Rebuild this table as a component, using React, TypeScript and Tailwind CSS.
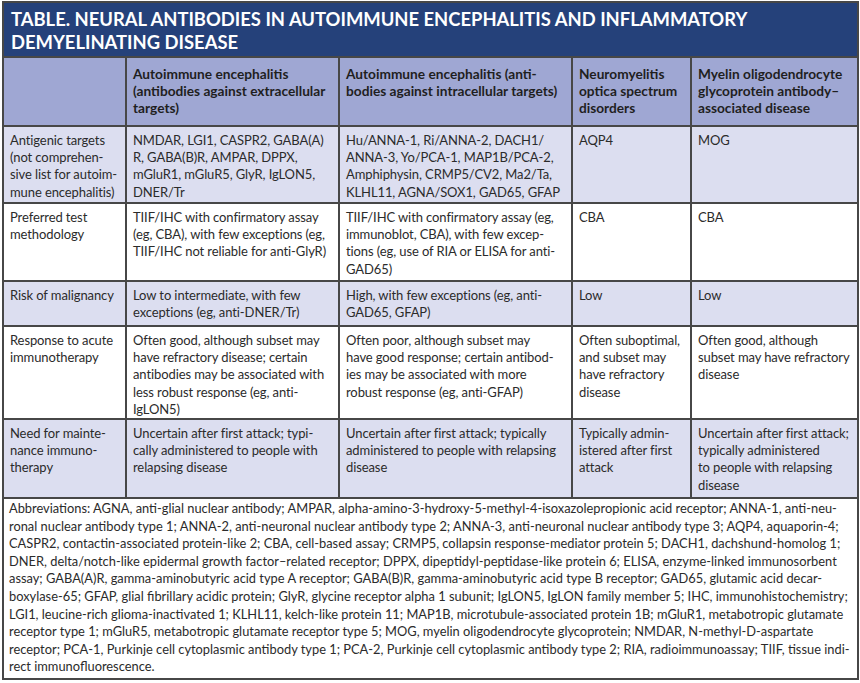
import React from 'react';

type Row = { shaded: boolean; h: string; cells: string[][] };

const headers: string[][] = [
    [],
    ['Autoimmune encephalitis', '(antibodies against extracellular', 'targets)'],
    ['Autoimmune encephalitis (anti-', 'bodies against intracellular targets)'],
    ['Neuromyelitis', 'optica spectrum', 'disorders'],
    ['Myelin oligodendrocyte', 'glycoprotein antibody–', 'associated disease'],
];

const rows: Row[] = [
    {
        shaded: true,
        h: 'h-[75px]',
        cells: [
            ['Antigenic targets', '(not comprehen-', 'sive list for autoim-', 'mune encephalitis)'],
            ['NMDAR, LGI1, CASPR2, GABA(A)', 'R, GABA(B)R, AMPAR, DPPX,', 'mGluR1, mGluR5, GlyR, IgLON5,', 'DNER/Tr'],
            ['Hu/ANNA-1, Ri/ANNA-2, DACH1/', 'ANNA-3, Yo/PCA-1, MAP1B/PCA-2,', 'Amphiphysin, CRMP5/CV2, Ma2/Ta,', 'KLHL11, AGNA/SOX1, GAD65, GFAP'],
            ['AQP4'],
            ['MOG'],
        ],
    },
    {
        shaded: false,
        h: 'h-[76px]',
        cells: [
            ['Preferred test', 'methodology'],
            ['TIIF/IHC with confirmatory assay', '(eg, CBA), with few exceptions (eg,', 'TIIF/IHC not reliable for anti-GlyR)'],
            ['TIIF/IHC with confirmatory assay (eg,', 'immunoblot, CBA), with few excep-', 'tions (eg, use of RIA or ELISA for anti-', 'GAD65)'],
            ['CBA'],
            ['CBA'],
        ],
    },
    {
        shaded: true,
        h: 'h-[43px]',
        cells: [
            ['Risk of malignancy'],
            ['Low to intermediate, with few', 'exceptions (eg, anti-DNER/Tr)'],
            ['High, with few exceptions (eg, anti-', 'GAD65, GFAP)'],
            ['Low'],
            ['Low'],
        ],
    },
    {
        shaded: false,
        h: 'h-[91px]',
        cells: [
            ['Response to acute', 'immunotherapy'],
            ['Often good, although subset may', 'have refractory disease; certain', 'antibodies may be associated with', 'less robust response (eg, anti-', 'IgLON5)'],
            ['Often poor, although subset may', 'have good response; certain antibod-', 'ies may be associated with more', 'robust response (eg, anti-GFAP)'],
            ['Often suboptimal,', 'and subset may', 'have refractory', 'disease'],
            ['Often good, although', 'subset may have refractory', 'disease'],
        ],
    },
    {
        shaded: true,
        h: 'h-[77px]',
        cells: [
            ['Need for mainte-', 'nance immuno-', 'therapy'],
            ['Uncertain after first attack; typi-', 'cally administered to people with', 'relapsing disease'],
            ['Uncertain after first attack; typically', 'administered to people with relapsing', 'disease'],
            ['Typically admin-', 'istered after first', 'attack'],
            ['Uncertain after first attack;', 'typically administered', 'to people with relapsing', 'disease'],
        ],
    },
];

const notes = [
    'Abbreviations: AGNA, anti-glial nuclear antibody; AMPAR, alpha-amino-3-hydroxy-5-methyl-4-isoxazolepropionic acid receptor; ANNA-1, anti-neu-',
    'ronal nuclear antibody type 1; ANNA-2, anti-neuronal nuclear antibody type 2; ANNA-3, anti-neuronal nuclear antibody type 3; AQP4, aquaporin-4;',
    'CASPR2, contactin-associated protein-like 2; CBA, cell-based assay; CRMP5, collapsin response-mediator protein 5; DACH1, dachshund-homolog 1;',
    'DNER, delta/notch-like epidermal growth factor–related receptor; DPPX, dipeptidyl-peptidase-like protein 6; ELISA, enzyme-linked immunosorbent',
    'assay; GABA(A)R, gamma-aminobutyric acid type A receptor; GABA(B)R, gamma-aminobutyric acid type B receptor; GAD65, glutamic acid decar-',
    'boxylase-65; GFAP, glial fibrillary acidic protein; GlyR, glycine receptor alpha 1 subunit; IgLON5, IgLON family member 5; IHC, immunohistochemistry;',
    'LGI1, leucine-rich glioma-inactivated 1; KLHL11, kelch-like protein 11; MAP1B, microtubule-associated protein 1B; mGluR1, metabotropic glutamate',
    'receptor type 1; mGluR5, metabotropic glutamate receptor type 5; MOG, myelin oligodendrocyte glycoprotein; NMDAR, N-methyl-D-aspartate',
    'receptor; PCA-1, Purkinje cell cytoplasmic antibody type 1; PCA-2, Purkinje cell cytoplasmic antibody type 2; RIA, radioimmunoassay; TIIF, tissue indi-',
    'rect immunofluorescence.',
];

const Lines: React.FC<{ lines: string[] }> = ({ lines }) => (
    <>
        {lines.map((l, i) => (
            <div key={i} className="whitespace-nowrap">{l}</div>
        ))}
    </>
);

const App: React.FC = () => {
    return (
        <div className="min-h-[683px] bg-white pt-px pl-[2px] font-['Lato',sans-serif]">
            <div className="w-[857px] border-2 border-[#474747] bg-[#474747]">
                <div className="h-[53px] bg-[#25417a] pl-[7px] pt-[5px] text-[18.4px] leading-[23px] font-bold text-white">
                    <div>TABLE. NEURAL ANTIBODIES IN AUTOIMMUNE ENCEPHALITIS AND INFLAMMATORY</div>
                    <div>DEMYELINATING DISEASE</div>
                </div>
                <div className="mt-[2px] grid grid-cols-[121px_211px_231px_117px_165px] gap-[2px]">
                    {headers.map((h, i) => (
                        <div key={i} className="h-[67px] bg-[#9fa7d3] pl-[6px] pt-[7px] text-[13.7px] leading-[17px] font-bold text-[#1f1f1f]">
                            <Lines lines={h} />
                        </div>
                    ))}
                    {rows.map((r, ri) =>
                        r.cells.map((c, ci) => (
                            <div
                                key={ri + '-' + ci}
                                className={`${r.h} ${r.shaded ? 'bg-[#dcdef0]' : 'bg-white'} pl-[6px] pt-[5px] text-[13px] leading-[17.2px] tracking-[-0.1px] text-[#2b2b2b]`}
                            >
                                <Lines lines={c} />
                            </div>
                        ))
                    )}
                </div>
                <div className="mt-[2px] h-[179px] bg-white pl-[5px] pt-[1px] text-[12.85px] leading-[17.6px] text-[#2b2b2b]">
                    <Lines lines={notes} />
                </div>
            </div>
        </div>
    );
};

export default App;
